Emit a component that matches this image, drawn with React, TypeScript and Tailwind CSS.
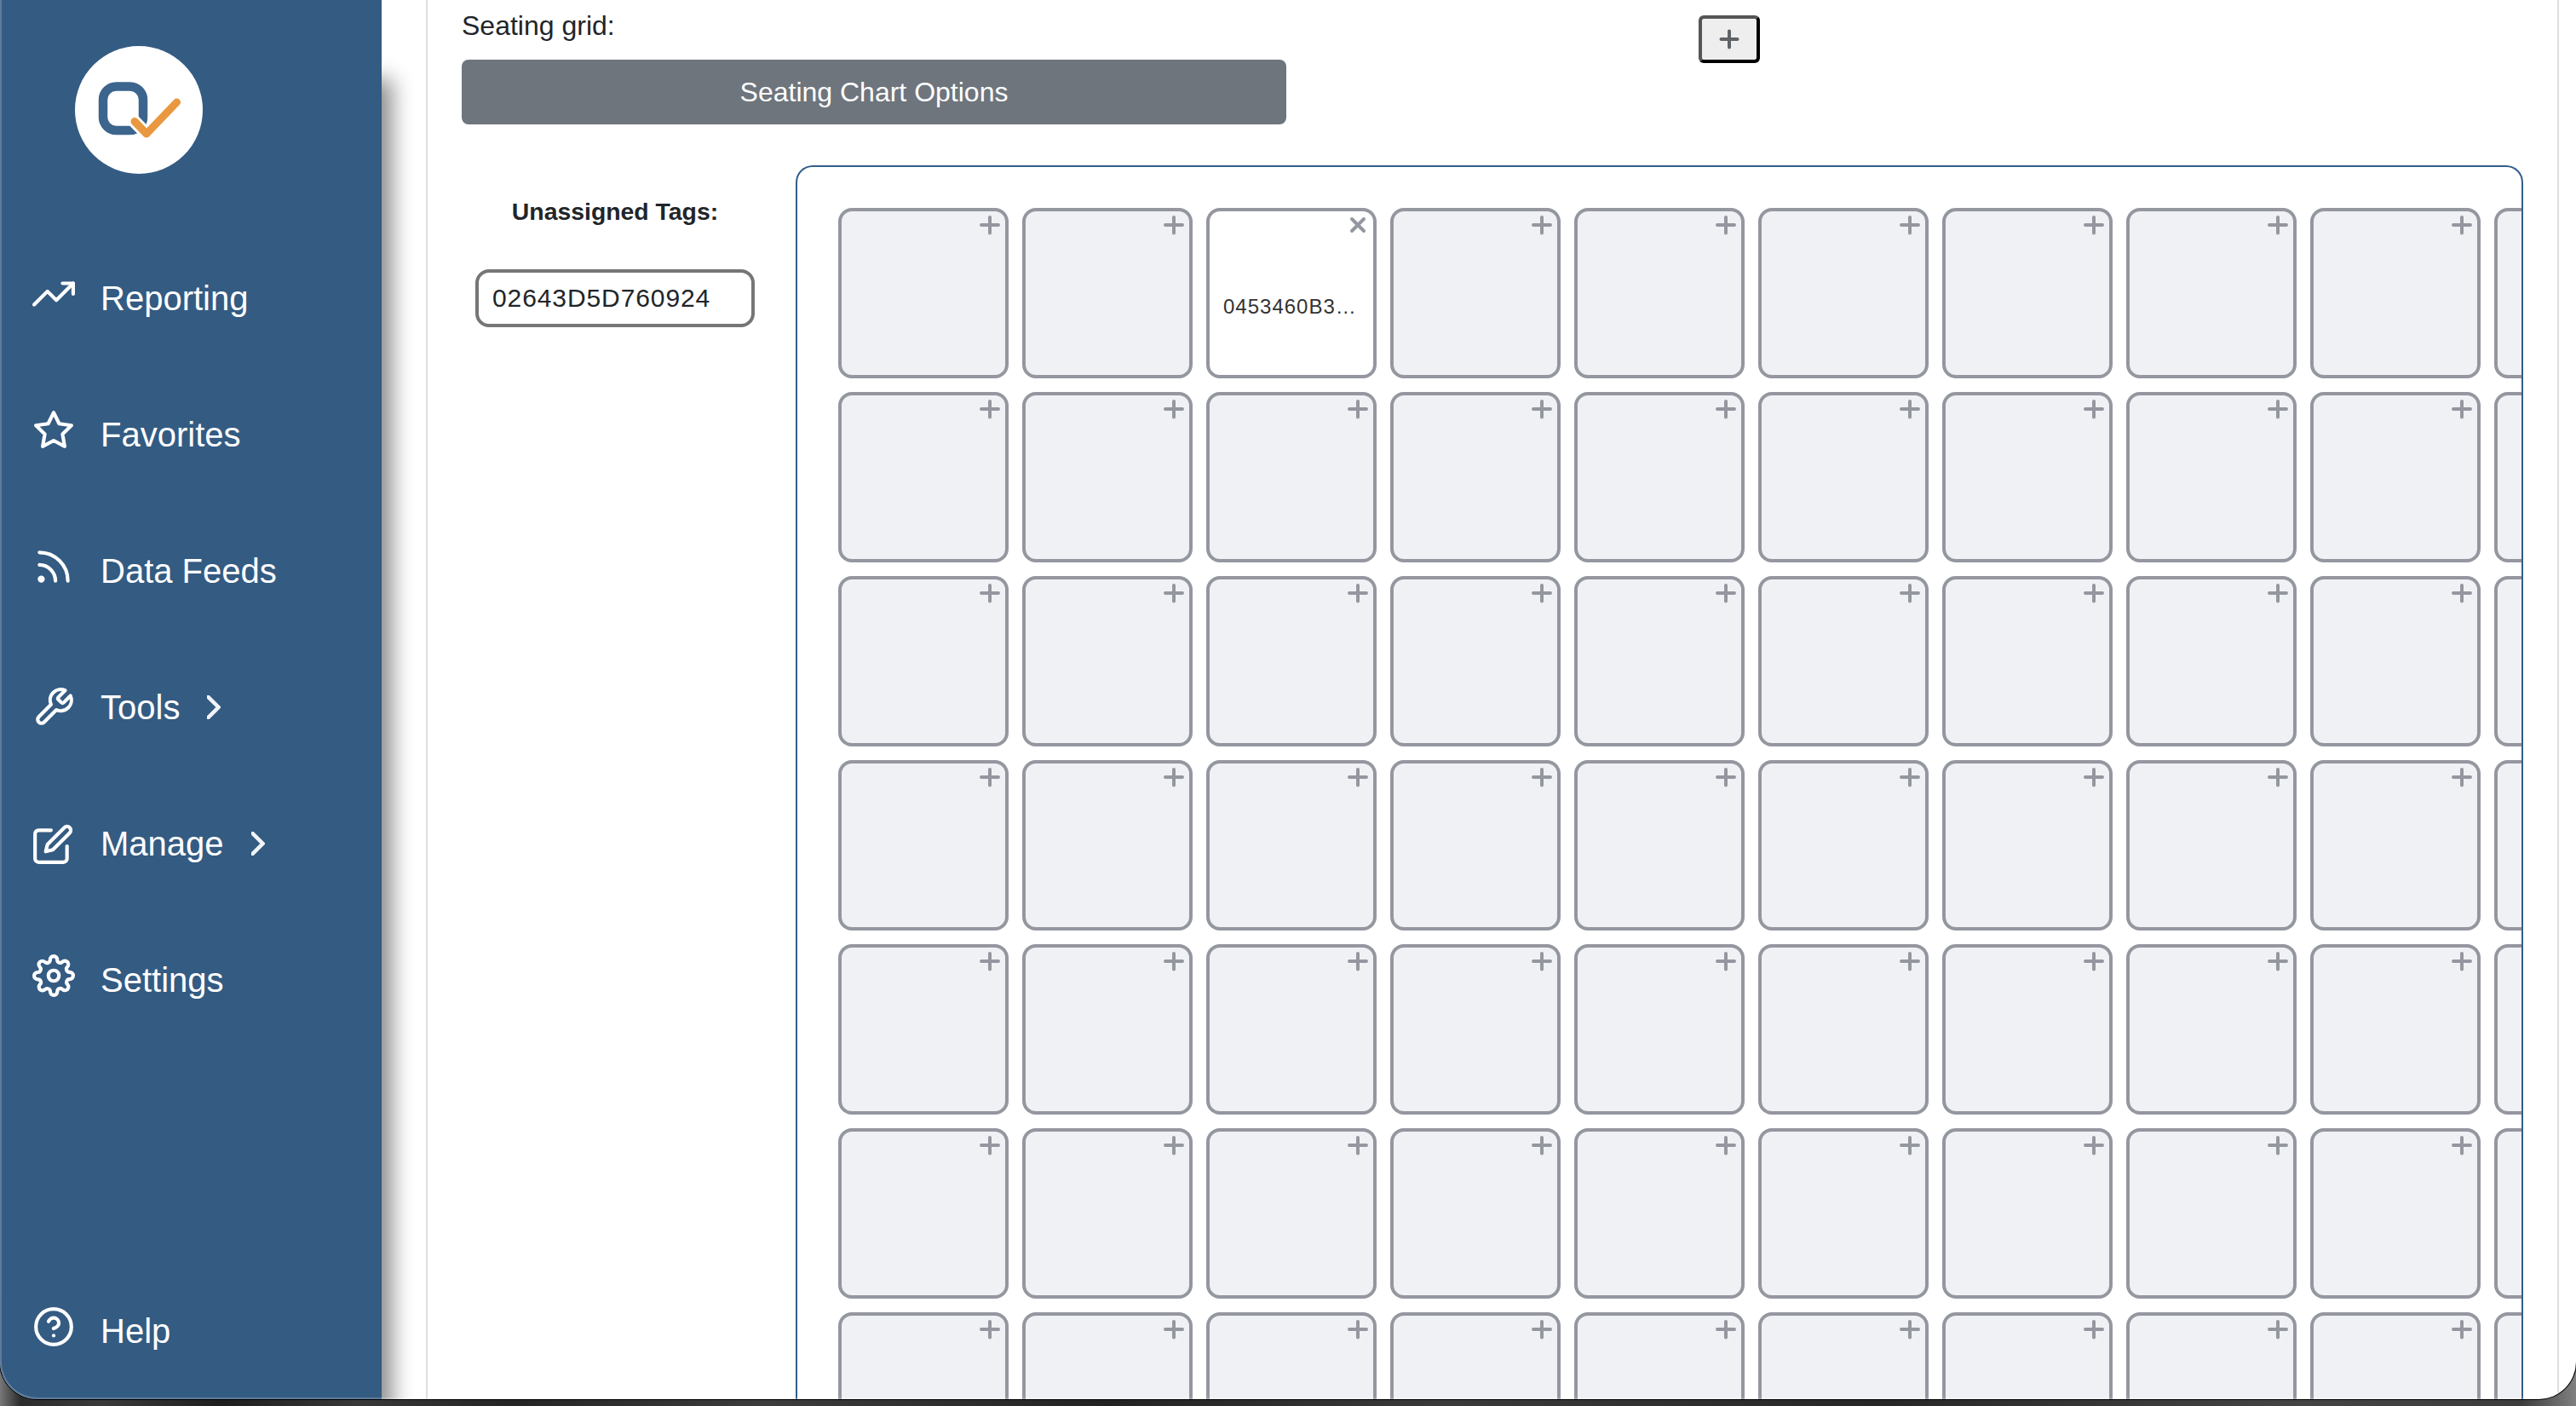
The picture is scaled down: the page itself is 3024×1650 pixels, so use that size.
import { IconType } from 'react-icons';
import { FiEdit, FiHelpCircle, FiRss, FiSettings, FiStar, FiTool, FiTrendingUp } from 'react-icons/fi';

interface NavItem {
  label: string;
  icon: IconType;
  expandable?: boolean;
  iconClass?: string;
}

const NAV_ITEMS: NavItem[] = [
  { label: 'Reporting', icon: FiTrendingUp },
  { label: 'Favorites', icon: FiStar },
  { label: 'Data Feeds', icon: FiRss },
  { label: 'Tools', icon: FiTool, expandable: true, iconClass: 'mt-[5px]' },
  { label: 'Manage', icon: FiEdit, expandable: true, iconClass: 'mt-[6px] -ml-px mr-px' },
  { label: 'Settings', icon: FiSettings },
];

const ROWS = 7;
const COLS = 10;
const MAX_TAG_CHARS = 9;

// seat index -> tag id
const ASSIGNED: Record<number, string> = {
  2: '0453460B3760924',
};

const UNASSIGNED_TAGS = ['02643D5D760924'];

const shortTag = (tag: string) => (tag.length > MAX_TAG_CHARS ? `${tag.slice(0, MAX_TAG_CHARS)}…` : tag);

function Logo() {
  return (
    <div className="ml-[88px] size-[150px] rounded-full bg-white">
      <svg viewBox="0 0 150 150" className="size-full" fill="none">
        <rect x="33" y="47.5" width="47" height="51.5" rx="15.5" stroke="#3c658d" strokeWidth="10.5" />
        {/* white gap around the check */}
        <path d="M62 80.5L84 103L119.5 66" stroke="#fff" strokeWidth="15" strokeLinejoin="round" />
        <path
          d="M70 88.5L84 103L119.5 66"
          stroke="#e9983f"
          strokeWidth="9"
          strokeLinecap="round"
          strokeLinejoin="round"
        />
      </svg>
    </div>
  );
}

function Chevron() {
  return (
    <svg viewBox="0 0 16 28" className="mt-4 ml-8 h-7 w-4" fill="none">
      <path d="M-2 -1.5L13.5 14L-2 29.5" stroke="#f2f4fa" strokeWidth="4.5" />
    </svg>
  );
}

function NavLink({ item }: { item: NavItem }) {
  const Icon = item.icon;
  return (
    <a className="flex h-[60px] items-start pl-[38px] text-[40px] leading-[60px] text-white">
      <Icon className={`size-[50px] shrink-0 ${item.iconClass ?? ''}`} />
      <span className="ml-[30px]">{item.label}</span>
      {item.expandable && <Chevron />}
    </a>
  );
}

function Sidebar() {
  return (
    <aside className="flex w-[448px] shrink-0 flex-col bg-[#345b82] pt-[54px] shadow-[12px_93px_24px_0_rgba(0,0,0,0.46)]">
      <Logo />
      <nav className="mt-[116px] flex flex-col gap-[100px]">
        {NAV_ITEMS.map((item) => (
          <NavLink key={item.label} item={item} />
        ))}
      </nav>
      <div className="mt-auto mb-[50px]">
        <NavLink item={{ label: 'Help', icon: FiHelpCircle }} />
      </div>
    </aside>
  );
}

function Seat({ tag }: { tag?: string }) {
  return (
    <div
      className={`flex size-[200px] flex-col rounded-[16px] border-4 border-[#94979f] ${tag ? 'bg-white' : 'bg-[#f0f1f4]'}`}
    >
      <svg viewBox="0 0 24 24" className="mt-1 mr-[6px] size-6 self-end" stroke="#94979f" strokeWidth="4" strokeLinecap="round">
        {tag ? <path d="M5 5L19 19M19 5L5 19" /> : <path d="M2 12H22M12 3V21.5" />}
      </svg>
      {tag && (
        <span className="mt-[66px] pl-4 text-[24px] leading-9 tracking-[1px] text-[#333]">{shortTag(tag)}</span>
      )}
    </div>
  );
}

function SeatingGrid() {
  return (
    <div className="h-full w-[2028px] overflow-hidden rounded-t-[20px] border-2 border-b-0 border-[#335e89] pt-12 pl-12">
      <div className="grid w-max grid-cols-[repeat(10,200px)] gap-4">
        {Array.from({ length: ROWS * COLS }, (_, i) => (
          <Seat key={i} tag={ASSIGNED[i]} />
        ))}
      </div>
    </div>
  );
}

export default function App() {
  return (
    <div className="h-[1650px] w-[3024px] overflow-hidden bg-[#303030] bg-[linear-gradient(90deg,#777_0,#2c2c2c_24px,#3a3a3a_120px,#1e1e1e_260px,#383838_420px,#242424_600px,#3c3c3c_900px,#222_1300px,#3a3a3a_1700px,#262626_2200px,#444_2700px,#3c3c3c_2960px,#808080_3024px)] font-['Liberation_Sans',Arial,sans-serif]">
      <div className="relative flex h-[1642px] overflow-hidden rounded-b-[44px] bg-white shadow-[0_0_0_1px_#000]">
        <Sidebar />
        <main className="ml-[52px] flex w-[2504px] shrink-0 flex-col border-x-2 border-[#dedede] text-[#212529]">
          <div className="flex h-[146px] shrink-0 pl-10">
            <div className="w-[968px]">
              <p className="h-[70px] pt-[6px] text-[32px] leading-[48px]">Seating grid:</p>
              <button className="block h-[76px] w-full rounded-lg bg-[#6e757d] text-[32px] leading-[48px] text-white">
                Seating Chart Options
              </button>
            </div>
            <button className="mt-[18px] ml-[484px] flex h-14 w-[72px] items-center justify-center rounded-md border-4 border-t-[#555] border-r-black border-b-black border-l-[#555] bg-[#eee]">
              <svg viewBox="0 0 24 24" className="size-6" stroke="#5f6368" strokeWidth="4" strokeLinecap="round">
                <path d="M2.5 12H21.5M12 2.5V21.5" />
              </svg>
            </button>
          </div>
          <div className="mt-12 flex min-h-0 flex-1">
            <div className="flex w-[432px] shrink-0 flex-col pl-14">
              <h6 className="mt-[30px] w-[328px] text-center text-[28.4px] leading-[48px] font-bold">Unassigned Tags:</h6>
              {UNASSIGNED_TAGS.map((tag) => (
                <div
                  key={tag}
                  className="mt-[44px] h-[68px] w-[328px] rounded-[16px] border-4 border-[#767676] pl-4 text-[30px] leading-[59px] tracking-[0.9px]"
                >
                  {tag}
                </div>
              ))}
            </div>
            <SeatingGrid />
          </div>
        </main>
        {/* window edge highlight */}
        <div className="pointer-events-none absolute inset-0 rounded-b-[44px] border-2 border-t-0 border-white/20" />
      </div>
    </div>
  );
}
